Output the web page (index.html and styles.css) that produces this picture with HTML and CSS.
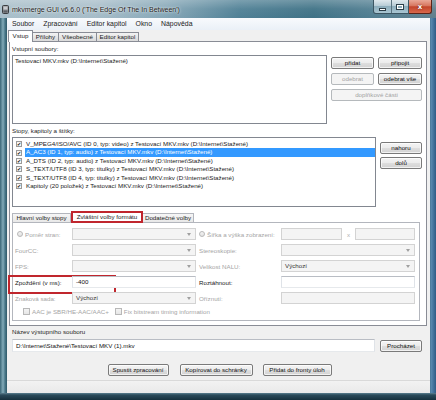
FILE: index.html
```html
<!DOCTYPE html>
<html lang="cs">
<head>
<meta charset="utf-8">
<title>mkvmerge GUI</title>
<link rel="stylesheet" href="styles.css">
</head>
<body>
<div class="win">
  <div class="titlebar">
    <svg class="appicon" width="7" height="9" viewBox="0 0 7 9">
      <rect x="0.5" y="0.5" width="6" height="8" rx="1" fill="#8c8f93" stroke="#3a3d40"/>
      <rect x="1.5" y="1.5" width="4" height="3" fill="#c9ccd0"/>
      <rect x="1.5" y="5.5" width="4" height="2" fill="#5c6064"/>
    </svg>
    <span class="title">mkvmerge GUI v6.6.0 ('The Edge Of The In Between')</span>
    <div class="caps">
      <div class="capgroup">
        <span class="cap"><span class="minglyph"></span></span>
        <span class="cap"><span class="maxglyph"></span></span>
      </div>
      <span class="cap close">x</span>
    </div>
  </div>
  <div class="framemid">
    <div class="client">
      <div class="menubar">
        <span class="mi">Soubor</span>
        <span class="mi">Zpracování</span>
        <span class="mi">Editor kapitol</span>
        <span class="mi">Okno</span>
        <span class="mi">Nápověda</span>
      </div>
      <div class="tabs">
        <span class="tab sel w1">Vstup</span>
        <span class="tab w2">Přílohy</span>
        <span class="tab w3">Všeobecné</span>
        <span class="tab w4">Editor kapitol</span>
      </div>
      <div class="panel">
        <div class="lbl first">Vstupní soubory:</div>
        <div class="row1">
          <div class="listbox files">
            <div class="fitem">Testovací MKV.mkv (D:\Internet\Stažené)</div>
          </div>
          <div class="btngrid">
            <button class="btn">přidat</button>
            <button class="btn">připojit</button>
            <button class="btn" disabled>odebrat</button>
            <button class="btn">odebrat vše</button>
            <button class="btn span2" disabled>doplňkové části</button>
          </div>
        </div>
        <div class="lbl second">Stopy, kapitoly a štítky:</div>
        <div class="row2">
          <div class="listbox tracks">
            <div class="trow"><span class="chk">✔</span><span class="ttext">V_MPEG4/ISO/AVC (ID 0, typ: video) z Testovací MKV.mkv (D:\Internet\Stažené)</span></div>
            <div class="trow selrow"><span class="chk">✔</span><span class="ttext">A_AC3 (ID 1, typ: audio) z Testovací MKV.mkv (D:\Internet\Stažené)</span></div>
            <div class="trow"><span class="chk">✔</span><span class="ttext">A_DTS (ID 2, typ: audio) z Testovací MKV.mkv (D:\Internet\Stažené)</span></div>
            <div class="trow"><span class="chk">✔</span><span class="ttext">S_TEXT/UTF8 (ID 3, typ: titulky) z Testovací MKV.mkv (D:\Internet\Stažené)</span></div>
            <div class="trow"><span class="chk">✔</span><span class="ttext">S_TEXT/UTF8 (ID 4, typ: titulky) z Testovací MKV.mkv (D:\Internet\Stažené)</span></div>
            <div class="trow"><span class="chk">✔</span><span class="ttext">Kapitoly (20 položek) z Testovací MKV.mkv (D:\Internet\Stažené)</span></div>
          </div>
          <div class="btncol">
            <button class="btn">nahoru</button>
            <button class="btn">dolů</button>
          </div>
        </div>
        <div class="subtabs">
          <span class="stab s1">Hlavní volby stopy</span>
          <span class="stab s2 ssel">Zvláštní volby formátu</span>
          <span class="stab s3">Dodatečné volby</span>
        </div>
        <div class="subpanel">
          <div class="fgrid">
            <span class="flbl dis"><span class="radio"></span>Poměr stran:</span>
            <span class="combo dis"><span class="arrow"></span></span>
            <span class="flbl dis rl"><span class="radio"></span>Šířka a výška zobrazení:</span>
            <span class="pair"><span class="edit dis wA"></span><span class="xsep">x</span><span class="edit dis wB"></span></span>

            <span class="flbl dis">FourCC:</span>
            <span class="combo dis"><span class="arrow"></span></span>
            <span class="flbl dis rl">Stereoskopie:</span>
            <span class="combo dis"><span class="arrow"></span></span>

            <span class="flbl dis">FPS:</span>
            <span class="combo dis"><span class="arrow"></span></span>
            <span class="flbl dis rl">Velikost NALU:</span>
            <span class="combo dis"><span class="ctext">Výchozí</span><span class="arrow"></span></span>

            <span class="flbl hl">Zpoždění (v ms):</span>
            <span class="edit on"><span class="ctext">-400</span></span>
            <span class="flbl rl">Roztáhnout:</span>
            <span class="edit on"></span>

            <span class="flbl dis">Znaková sada:</span>
            <span class="combo dis"><span class="ctext">Výchozí</span><span class="arrow"></span></span>
            <span class="flbl dis rl">Oříznutí:</span>
            <span class="edit dis"></span>
          </div>
          <div class="checks">
            <span class="cb"><span class="box"></span>AAC je SBR/HE-AAC/AAC+</span>
            <span class="cb cb2"><span class="box"></span>Fix bitstream timing information</span>
          </div>
        </div>
      </div>
      <div class="out">
        <div class="lbl olbl">Název výstupního souboru</div>
        <div class="outrow">
          <div class="edit on outedit"><span class="ctext">D:\Internet\Stažené\Testovací MKV (1).mkv</span></div>
          <button class="btn browse">Procházet</button>
        </div>
        <div class="actions">
          <button class="btn a1">Spustit zpracování</button>
          <button class="btn a2">Kopírovat do schránky</button>
          <button class="btn a3">Přidat do fronty úloh</button>
        </div>
      </div>
      <div class="status"></div>
    </div>
  </div>
  <div class="framebottom"></div>
</div>
</body>
</html>
```

FILE: styles.css
```css
* { box-sizing: border-box; }
html, body { margin: 0; padding: 0; }
body {
  width: 436px; height: 400px; overflow: hidden;
  font-family: "Liberation Sans", Arial, sans-serif;
  font-size: 6.2px; color: #1a1a1a;
  background: #1e3f4f;
}
.win {
  width: 436px; height: 400px;
  display: flex; flex-direction: column;
  background:
    linear-gradient(180deg, rgba(255,255,255,0.25) 0, rgba(255,255,255,0.05) 9px, rgba(0,0,0,0) 18px),
    linear-gradient(90deg, #a9bfca 0%, #a6bcc8 22%, #86a7b7 38%, #4f8095 55%, #3f7286 72%, #527f92 86%, #627f8c 100%);
}

/* title bar */
.titlebar { height: 18px; display: flex; align-items: flex-start; padding-left: 2px; }
.appicon { margin-top: 5px; flex: none; }
.title {
  margin-left: 3px; padding-top: 6px; line-height: 8px;
  font-size: 7px; color: #151515;
  text-shadow: 0 0 3px rgba(255,255,255,0.9), 0 0 1px rgba(255,255,255,0.9);
  white-space: nowrap;
}
.caps { margin-left: auto; margin-right: 4px; display: flex; height: 14px; }
.capgroup {
  display: flex; width: 36px; height: 14px;
  border: 1px solid #3c5663; border-top: none;
  border-radius: 0 0 0 3px;
  background: linear-gradient(180deg, #dfe8ed 0%, #b7ccd6 45%, #8eaebd 50%, #a9c6d2 100%);
}
.cap { flex: 1; display: flex; align-items: center; justify-content: center; }
.capgroup .cap + .cap { border-left: 1px solid #5a7380; }
.minglyph { width: 7px; height: 3px; margin-top: 5px; background: #fff; border: 1px solid #2c3e48; }
.maxglyph { width: 8px; height: 6px; border: 1px solid #2c3e48; box-shadow: inset 0 0 0 1px #fff; background: #8aa9b8; }
.close {
  flex: none; width: 23px; height: 14px;
  border: 1px solid #5b2418; border-top: none; border-left: none;
  border-radius: 0 0 3px 0;
  background: linear-gradient(180deg, #e9a897 0%, #d7765f 45%, #c2442a 52%, #d9684b 100%);
  color: #fff; font-family: "DejaVu Sans", sans-serif; font-weight: bold; font-size: 7px;
  text-shadow: 0 0 2px #5b1a10;
}

/* frame */
.framemid {
  flex: 1; display: flex; padding: 0 6px 0 7px;
  background: linear-gradient(90deg, #3a6676 0, #83abb9 3px, #4a7889 5px, #2f5968 7px, #2f5968 429px, #5a8ab0 431px, #2f5c86 436px);
}
.framebottom {
  height: 7px;
  background: linear-gradient(180deg, #5b7f90 0, #2a4a5a 2px, #16303d 7px);
}
.client { flex: 1; display: flex; flex-direction: column; background: #f0f0f0; min-width: 0; }

/* menu */
.menubar {
  height: 12px; display: flex; align-items: center; padding-left: 2px;
  background: linear-gradient(180deg, #f8fafd 0%, #eaf0f7 100%);
  font-size: 6.9px;
}
.mi { padding: 0 3px; line-height: 12px; white-space: nowrap; }
.mi + .mi { margin-left: 3px; }

/* top tabs */
.tabs { height: 11px; display: flex; align-items: flex-end; padding-left: 1px; position: relative; z-index: 1; }
.tab {
  height: 9px; line-height: 8px; text-align: center; white-space: nowrap;
  border: 1px solid #898c95; border-bottom: none; border-left: none;
  background: linear-gradient(180deg, #f3f3f3 0%, #e6e6e6 50%, #dadada 100%);
}
.tab.w1 { width: 25px; border-left: 1px solid #898c95; }
.tab.w2 { width: 26px; }
.tab.w3 { width: 38px; }
.tab.w4 { width: 42px; }
.tab.sel { height: 12px; line-height: 10px; background: #fff; margin-bottom: -1px; border-right: 1px solid #898c95; }

/* main panel */
.panel {
  height: 285px; margin: 0 3px 0 2px;
  border: 1px solid #898c95; background: #fff;
  padding: 0 4px 0 2px;
  display: flex; flex-direction: column;
}
.lbl { height: 8px; line-height: 8px; white-space: nowrap; color: #1e1e1e; }
.lbl.first { margin-top: 3px; }
.lbl.second { margin-top: 3px; }
.row1 { margin-top: 2px; height: 69px; display: flex; gap: 4px; }
.listbox { border: 1px solid #828790; background: #fff; }
.files { flex: 1; padding: 1px 2px; }
.fitem { line-height: 8px; white-space: nowrap; }
.btngrid {
  width: 91px; display: grid; grid-template-columns: 43px 44px; column-gap: 4px; row-gap: 4px;
  grid-auto-rows: 12px; align-content: start; padding-top: 2px;
}
.span2 { grid-column: 1 / 3; }
.btn {
  font: inherit; color: #111; padding: 0; margin: 0;
  height: 12px; line-height: 10px; white-space: nowrap;
  border: 1px solid #7a7a7a; border-radius: 2px;
  background: linear-gradient(180deg, #f4f4f4 0%, #ececec 48%, #dedede 52%, #d2d2d2 100%);
  box-shadow: inset 0 0 0 1px rgba(255,255,255,0.7);
}
.btn:disabled {
  color: #a3a3a3; border-color: #b5b9bc;
  background: #f4f4f4; box-shadow: none;
}
.row2 { margin-top: 2px; height: 70px; display: flex; gap: 4px; }
.tracks { width: 364px; padding-top: 2px; overflow: hidden; }
.trow { height: 8.4px; display: flex; align-items: center; white-space: nowrap; }
.chk {
  flex: none; width: 6px; height: 6px; margin: 0 3px 0 3px;
  border: 1px solid #9a9a9a; background: #f6f6f6;
  font-family: "DejaVu Sans", sans-serif; font-size: 5px; line-height: 4px;
  text-align: center; color: #111; overflow: visible;
}
.ttext { flex: 1; height: 8.4px; line-height: 8.4px; padding-left: 1px; }
.selrow .ttext { background: #3399ff; color: #fff; }
.btncol { width: 42px; display: flex; flex-direction: column; gap: 3px; padding-top: 5px; }

/* sub tabs */
.subtabs { margin-top: 4px; height: 11px; display: flex; align-items: flex-end; position: relative; z-index: 1; }
.stab {
  height: 9px; line-height: 8px; text-align: center; white-space: nowrap;
  border: 1px solid #b3b6bd; border-bottom: none;
  background: linear-gradient(180deg, #f6f6f6 0%, #e8e8e8 100%);
}
.s1 { width: 59px; }
.s2 { width: 72px; }
.s3 { width: 51px; border-left: none; }
.ssel {
  height: 12px; line-height: 8px; margin-bottom: -1px; background: #fff;
  border: 2px solid #c0262d; border-bottom: 2px solid #c0262d;
}
.subpanel {
  width: 408px; height: 99px;
  border: 1px solid #b3b6bd; background: #fff;
  padding: 5px 4px 0 2px;
}
.fgrid {
  display: grid;
  grid-template-columns: 57px 124px 85px 134px;
  grid-auto-rows: 12px; row-gap: 4px;
}
.flbl { display: flex; align-items: center; white-space: nowrap; color: #1a1a1a; position: relative; }
.flbl.dis { color: #a5a5a5; }
.flbl.rl { padding-left: 3px; }
.radio {
  width: 6px; height: 6px; border-radius: 50%; margin: 0 2px 0 2px;
  border: 1px solid #b8b8b8; background: linear-gradient(180deg, #f4f4f4, #e2e2e2);
}
.rl .radio { margin-left: 0; }
.hl::after {
  content: ""; position: absolute; left: -7px; top: -1px; width: 104px; height: 15px;
  border: 2px solid #c0262d;
}
.combo, .edit {
  position: relative; display: flex; align-items: center; height: 12px;
  border: 1px solid #d3d3d3; background: #f4f4f4;
}
.edit.on { background: #fff; border-color: #b9bdc4 #dfe3e8 #e6e9ec #dfe3e8; }
.ctext { padding-left: 3px; white-space: nowrap; color: #333; line-height: 10px; }
.edit.on .ctext { color: #111; }
.arrow {
  position: absolute; right: 4px; top: 4px;
  width: 0; height: 0;
  border-left: 2px solid transparent; border-right: 2px solid transparent;
  border-top: 3px solid #a0a0a0;
}
.pair { display: flex; align-items: center; }
.pair .wA { width: 61px; }
.pair .wB { width: 60px; }
.xsep { width: 13px; text-align: center; color: #b0b0b0; }
.checks { margin-top: 1px; height: 12px; display: flex; align-items: center; padding-left: 8px; color: #a5a5a5; }
.cb { display: flex; align-items: center; white-space: nowrap; }
.box { width: 7px; height: 7px; margin-right: 2px; border: 1px solid #b8b8b8; background: linear-gradient(180deg, #f4f4f4, #e6e6e6); }
.cb2 { margin-left: 6px; }

/* output + actions */
.out { padding: 0 3px 0 5px; }
.olbl { margin-top: 2px; }
.outrow { margin-top: 3px; height: 13px; display: flex; align-items: center; }
.outedit { width: 363px; height: 13px; }
.browse { width: 42px; margin-left: 5px; }
.actions { margin-top: 12px; height: 12px; display: flex; justify-content: center; }
.a1 { width: 61px; }
.a2 { width: 73px; margin-left: 11px; }
.a3 { width: 69px; margin-left: 10px; }
.status {
  margin-top: auto; height: 13px;
  border-top: 1px solid #d9d9d9;
  background: linear-gradient(180deg, #f2f2f2, #e9e9e9);
}
```
